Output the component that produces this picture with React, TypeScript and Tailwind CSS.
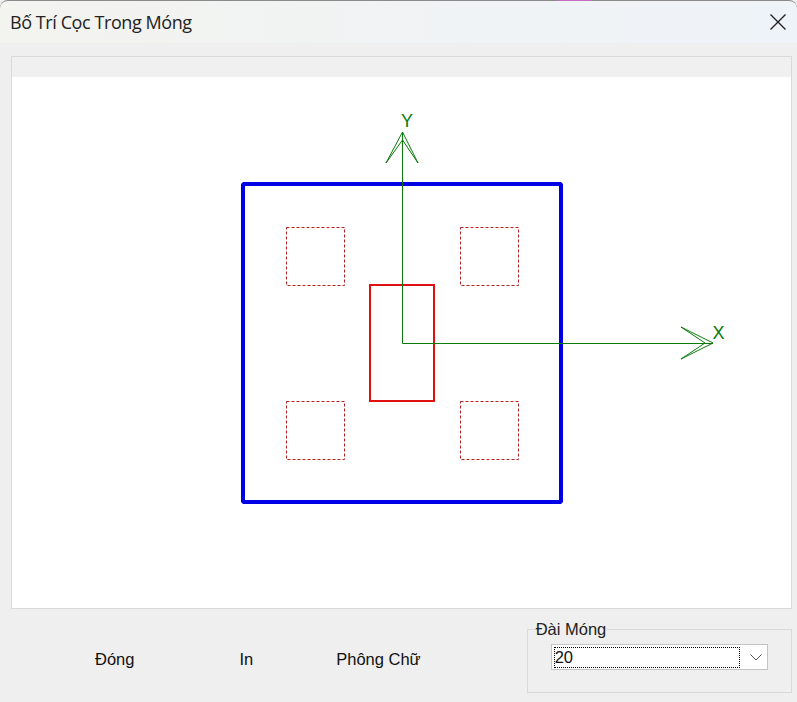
const Drawing = () => {
  const piles = [
    [286.5, 227.5],
    [460.5, 227.5],
    [286.5, 401.5],
    [460.5, 401.5],
  ];
  return (
    <svg viewBox="12 77 779 531" className="block h-[531px] w-[779px]">
      <rect x="243" y="184" width="318" height="318" fill="none" stroke="#0000e6" strokeWidth="4" strokeLinejoin="bevel" />
      {piles.map(([x, y]) => (
        <rect
          key={`${x}-${y}`}
          x={x}
          y={y}
          width="58"
          height="58"
          fill="none"
          stroke="#b32020"
          strokeWidth="1"
          strokeDasharray="3 2"
        />
      ))}
      <rect x="370" y="285" width="64" height="116" fill="none" stroke="#e01010" strokeWidth="2" />
      <g fill="none" stroke="#0b7a0b" strokeWidth="1">
        <path d="M402.5 132V343.5H713" />
        <path d="M386 163L402.5 132L418 163M386 163L402.5 140L418 163" />
        <path d="M681 327L713 343L681 359M681 327L705 343L681 359" />
      </g>
      <text x="401" y="127" fill="#0b7a0b" fontSize="18" fontFamily="'Liberation Sans', sans-serif">
        Y
      </text>
      <text x="712.5" y="339" fill="#0b7a0b" fontSize="18" fontFamily="'Liberation Sans', sans-serif">
        X
      </text>
    </svg>
  );
};

export default function App() {
  return (
    <div className="relative flex h-[702px] w-[797px] flex-col overflow-hidden bg-[#efefef] font-['Liberation_Sans',sans-serif] text-[#111]">
      {/* sliver of whatever sits behind the dialog */}
      <div className="absolute left-[557px] top-0 h-px w-[34px] bg-[#c46cc4]" />
      <div className="flex h-[43px] shrink-0 items-center justify-between rounded-t-lg border-t border-[#8a8a8a] bg-gradient-to-r from-[#f3f3ef] to-[#eef3f9] pl-[10px] pr-[10px]">
        <span className="font-['Open_Sans',sans-serif] text-[18px] tracking-[-0.42px] text-[#222]">Bố Trí Cọc Trong Móng</span>
        <svg width="18" height="18" viewBox="0 0 18 18" fill="none" stroke="#222" strokeWidth="1.4">
          <path d="M1.5 1.5L16.5 16.5M16.5 1.5L1.5 16.5" />
        </svg>
      </div>

      <div className="ml-[11px] mt-[13px] h-[553px] w-[781px] shrink-0 border border-[#d9d9d9]">
        <div className="h-[20px] bg-[#f0f0f0]" />
        <div className="h-[531px] bg-white">
          <Drawing />
        </div>
      </div>

      <div className="flex flex-1 items-start text-[16.5px]">
        <button className="ml-[95px] mt-[40px] leading-5">Đóng</button>
        <button className="ml-[105px] mt-[40px] leading-5">In</button>
        <button className="ml-[83px] mt-[40px] leading-5">Phông Chữ</button>
        <fieldset className="ml-[106px] mt-[11px] h-[73px] w-[265px] border border-[#d9d9d9] pl-[23px]">
          <legend className="-ml-[15px] px-0 leading-[18px] text-[#222]">Đài Móng</legend>
          <div className="mt-[6px] flex h-[26px] w-[217px] items-center border border-[#c4c4c4] bg-white p-[2px]">
            <div className="flex h-[21px] w-[186px] items-center border border-dotted border-black leading-none">20</div>
            <svg className="ml-[10px]" width="12" height="7" viewBox="0 0 12 7" fill="none" stroke="#555" strokeWidth="1">
              <path d="M0.5 0.5L6 6L11.5 0.5" />
            </svg>
          </div>
        </fieldset>
      </div>
    </div>
  );
}
